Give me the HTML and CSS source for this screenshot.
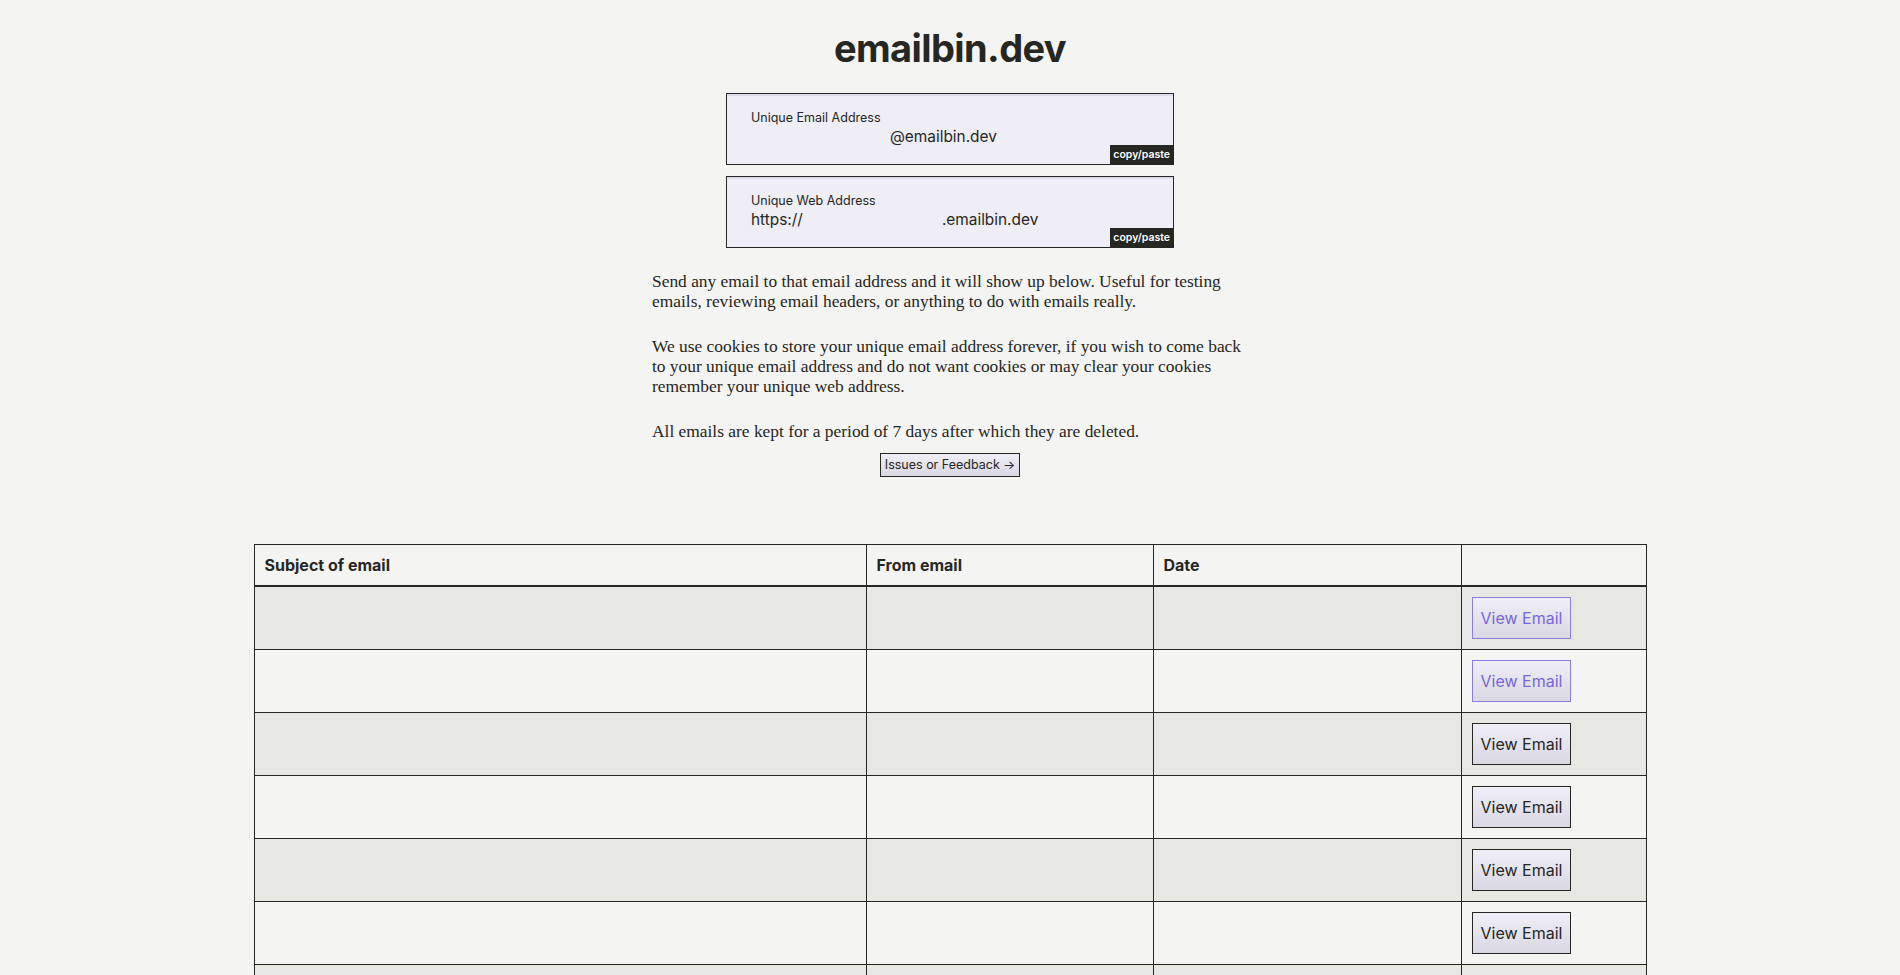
FILE: index.html
```html
<!DOCTYPE html>
<html lang="en">
<head>
    <meta charset="UTF-8">
    <meta name="viewport" content="width=device-width, initial-scale=1.0">
    <title>emailbin.dev</title>
    <link rel="stylesheet" href="styles.css">
</head>
<body>
    <header>
        <h1>emailbin.dev</h1>
    </header>
    <div class="wrap">
        <div class="field">
            <label for="email">Unique Email Address</label>
            <div class="field-row">
                <input type="text" id="email" value="" />
                <span>@emailbin.dev</span>
            </div>
            <span class="copy">copy/paste</span>
        </div>
        <div class="field">
            <label for="web">Unique Web Address</label>
            <div class="field-row">
                <span>https://</span>
                <input type="text" id="web" value="" />
                <span>.emailbin.dev</span>
            </div>
            <span class="copy">copy/paste</span>
        </div>
        <div class="info">
            <p>Send any email to that email address and it will show up below. Useful for testing emails, reviewing email headers, or anything to do with emails really.</p>
            <p>We use cookies to store your unique email address forever, if you wish to come back to your unique email address and do not want cookies or may clear your cookies remember your unique web address.</p>
            <p>All emails are kept for a period of 7 days after which they are deleted.</p>
            <a class="feedback" href="#">Issues or Feedback &rarr;</a>
        </div>
    </div>
    <table class="emails">
        <colgroup>
            <col class="c-subject">
            <col class="c-from">
            <col class="c-date">
            <col class="c-view">
        </colgroup>
        <thead>
            <tr>
                <th>Subject of email</th>
                <th>From email</th>
                <th>Date</th>
                <th></th>
            </tr>
        </thead>
        <tbody>
            <tr><td></td><td></td><td></td><td><button class="view seen">View Email</button></td></tr>
            <tr><td></td><td></td><td></td><td><button class="view seen">View Email</button></td></tr>
            <tr><td></td><td></td><td></td><td><button class="view">View Email</button></td></tr>
            <tr><td></td><td></td><td></td><td><button class="view">View Email</button></td></tr>
            <tr><td></td><td></td><td></td><td><button class="view">View Email</button></td></tr>
            <tr><td></td><td></td><td></td><td><button class="view">View Email</button></td></tr>
            <tr><td></td><td></td><td></td><td><button class="view">View Email</button></td></tr>
            <tr><td></td><td></td><td></td><td><button class="view">View Email</button></td></tr>
        </tbody>
    </table>
</body>
</html>
```
FILE: styles.css
```css
html,
body {
    margin: 0;
    padding: 0;
    background-color: #f4f4f2;
    color: #262622;
    font-family: Inter, "Liberation Sans", sans-serif;
}
h1 {
    margin: 24px 0 21px 0;
    text-align: center;
    font-size: 38px;
    line-height: 48px;
    font-weight: 700;
    letter-spacing: -0.6px;
}
.wrap {
    width: 600px;
    margin: 0 auto;
}
/* address boxes */
.field {
    position: relative;
    width: 448px;
    margin: 0 auto 11px auto;
    box-sizing: border-box;
    padding: 16px 24px 16px 24px;
    border: 1px solid #262622;
    background-color: #efeef6;
    box-shadow: inset 0 2px 0 #dddce8;
}
.field>label {
    display: block;
    font-size: 12.5px;
    line-height: 16px;
}
.field-row {
    display: flex;
    align-items: center;
    font-size: 15.4px;
    line-height: 22px;
}
.field-row>input {
    width: 139px;
    padding: 0;
    border: none;
    outline: none;
    background: transparent;
    font-family: inherit;
    font-size: 15.4px;
}
.copy {
    position: absolute;
    right: 0;
    bottom: 0;
    padding: 0 3px;
    line-height: 19px;
    font-size: 10.5px;
    font-weight: 600;
    color: #fff;
    background-color: #262622;
}
/* text */
.info {
    padding-top: 12px;
    text-align: center;
}
.info>p {
    margin: 0 0 25px 0;
    padding-left: 2px;
    text-align: left;
    font-family: "Liberation Serif", serif;
    font-size: 17.4px;
    line-height: 20px;
}
.info>p:last-of-type {
    margin-bottom: 12px;
}
.feedback {
    display: inline-block;
    padding: 2px 4px;
    font-size: 12.5px;
    line-height: 18px;
    color: #262622;
    text-decoration: none;
    border: 1px solid #262622;
    background: linear-gradient(#f0eff7, #d9d8e3);
}
/* table */
.emails {
    width: 1392px;
    margin: 67px auto 0 auto;
    border-collapse: collapse;
    table-layout: fixed;
}
.c-subject { width: 612px; }
.c-from { width: 287px; }
.c-date { width: 308px; }
.c-view { width: 185px; }
.emails th,
.emails td {
    border: 1px solid #262622;
    padding: 10px 10px;
    text-align: left;
    vertical-align: top;
}
.emails th {
    font-size: 16px;
    line-height: 20px;
    font-weight: 700;
    border-bottom: 2px solid #262622;
}
.emails td {
    height: 42px;
}
.emails tbody tr:nth-child(odd) {
    background-color: #e8e8e3;
}
.view {
    display: block;
    padding: 10px 8px;
    font-family: inherit;
    font-size: 16px;
    line-height: 20px;
    color: #262622;
    border: 1px solid #262622;
    background: linear-gradient(#f0eff7, #d9d8e3);
    cursor: pointer;
}
.view.seen {
    color: #7a66d9;
    border-color: #8a7de0;
}
```
